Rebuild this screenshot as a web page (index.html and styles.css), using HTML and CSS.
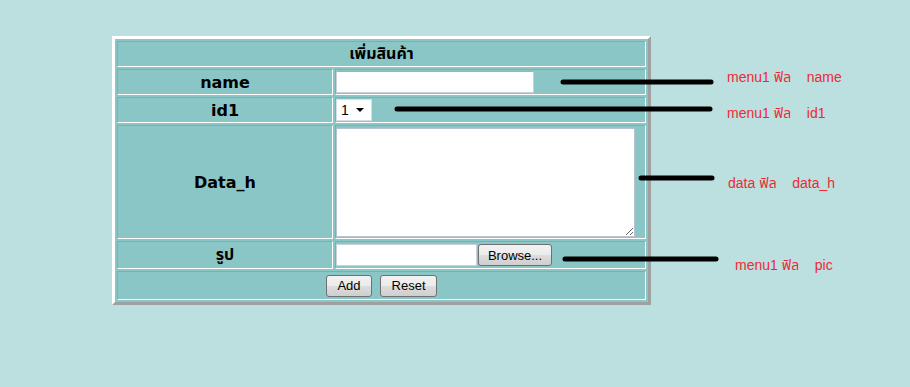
FILE: index.html
```html
<!DOCTYPE html>
<html lang="th">
<head>
  <meta charset="UTF-8" />
  <meta name="viewport" content="width=device-width, initial-scale=1" />
  <title>เพิ่มสินค้า</title>
  <link rel="stylesheet" href="styles.css">
</head>
<body>

  <div class="page">
    <form class="product-form" onsubmit="return false;">
      <table class="form-table">
        <tr class="row-head">
          <th colspan="2">เพิ่มสินค้า</th>
        </tr>
        <tr class="row-short">
          <td class="label">name</td>
          <td><input class="txt-name" type="text" /></td>
        </tr>
        <tr class="row-short">
          <td class="label">id1</td>
          <td>
            <span class="select-box">1 <span class="arrow"></span></span>
          </td>
        </tr>
        <tr class="row-data">
          <td class="label">Data_h</td>
          <td><textarea class="txt-data"></textarea></td>
        </tr>
        <tr class="row-pic">
          <td class="label">รูป</td>
          <td>
            <span class="file-box"></span><button class="btn btn-browse" type="button">Browse...</button>
          </td>
        </tr>
        <tr class="row-buttons">
          <td colspan="2" class="buttons">
            <button class="btn btn-add" type="button">Add</button>
            <button class="btn btn-reset" type="reset">Reset</button>
          </td>
        </tr>
      </table>
    </form>

    <!-- notes drawn over the form -->
    <svg class="pointers" width="910" height="387" viewBox="0 0 910 387">
      <g stroke="#000" stroke-width="5" stroke-linecap="round">
        <line x1="563" y1="82" x2="711" y2="82" />
        <line x1="397" y1="109" x2="710" y2="109" />
        <line x1="641" y1="178" x2="712" y2="178" />
        <line x1="565" y1="259" x2="716" y2="259" />
      </g>
    </svg>
    <span class="note note-1">menu1 ฟิล    name</span>
    <span class="note note-2">menu1 ฟิล    id1</span>
    <span class="note note-3">data ฟิล    data_h</span>
    <span class="note note-4">menu1 ฟิล    pic</span>
  </div>

</body>
</html>
```

FILE: styles.css
```css
body {
  margin: 0;
  background: #bcdfdf;
  font-family: "DejaVu Sans", "Noto Sans", "Noto Sans Thai", "Loma", sans-serif;
}
.page {
  position: relative;
  width: 910px;
  height: 387px;
  padding: 36px 0 0 112px;
  box-sizing: border-box;
}
.form-table {
  width: 539px;
  border: 3px solid;
  border-color: #ffffff #a0a0a0 #a0a0a0 #ffffff;
  border-spacing: 2px;
  background: #8ac6c6;
}
.form-table th,
.form-table td {
  border: 1px solid;
  border-color: #a0a0a0 #ffffff #ffffff #a0a0a0;
  background: #8ac6c6;
  padding: 0;
  color: #000;
}
.form-table th {
  font-size: 16px;
  font-weight: bold;
  height: 24px;
}
.label {
  width: 214px;
  text-align: center;
  font-weight: bold;
  font-size: 16px;
}
.row-short td {
  height: 24px;
}
.row-data td {
  height: 112px;
}
.row-pic td {
  height: 26px;
}
.row-buttons td {
  height: 27px;
}
.buttons {
  text-align: center;
}
.txt-name {
  display: block;
  width: 198px;
  height: 22px;
  box-sizing: border-box;
  border: 1px solid #c8d2dc;
  border-top-color: #abadb3;
  background: #fff;
  margin: 0;
  padding: 0;
}
.select-box {
  display: inline-flex;
  align-items: center;
  box-sizing: border-box;
  width: 36px;
  height: 22px;
  padding-left: 4px;
  background: #fff;
  border: 1px solid #d5dde5;
  font-family: "Liberation Sans", Arial, sans-serif;
  font-size: 14px;
  font-weight: normal;
}
.arrow {
  margin-left: 7px;
  width: 0;
  height: 0;
  border-left: 4px solid transparent;
  border-right: 4px solid transparent;
  border-top: 4px solid #000;
}
.txt-data {
  display: block;
  width: 299px;
  height: 109px;
  box-sizing: border-box;
  border: 1px solid #b5c4d2;
  background: #fff;
  margin: 1px 0;
  resize: both;
}
.file-box {
  display: inline-block;
  vertical-align: middle;
  width: 141px;
  height: 22px;
  box-sizing: border-box;
  border: 1px solid #c8d2dc;
  background: #fff;
}
.btn {
  font-family: "Liberation Sans", Arial, sans-serif;
  font-size: 13px;
  color: #000;
  height: 22px;
  padding: 0 8px;
  border: 1px solid #707070;
  border-radius: 3px;
  background: linear-gradient(#f2f2f2 0%, #ebebeb 50%, #dddddd 51%, #cfcfcf 100%);
  vertical-align: middle;
}
.btn-browse {
  width: 74px;
  margin-left: 1px;
  padding: 0;
}
.btn-add {
  width: 46px;
  margin-right: 3px;
}
.btn-reset {
  width: 57px;
}
.pointers {
  position: absolute;
  left: 0;
  top: 0;
  pointer-events: none;
}
.note {
  position: absolute;
  white-space: pre;
  color: #ee2a35;
  font-family: "Liberation Sans", Arial, "Noto Sans Thai", sans-serif;
  font-size: 14px;
}
.note-1 {
  left: 727px;
  top: 67px;
}
.note-2 {
  left: 727px;
  top: 103px;
}
.note-3 {
  left: 728px;
  top: 173px;
}
.note-4 {
  left: 735px;
  top: 255px;
}
```
